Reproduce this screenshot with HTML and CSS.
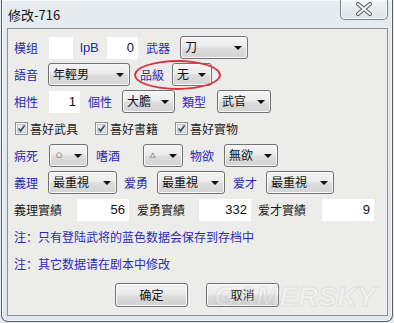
FILE: index.html
```html
<!DOCTYPE html>
<html>
<head>
<meta charset="utf-8">
<link rel="stylesheet" href="styles.css">
</head>
<body>
<div class="window">
  <div class="titlebar">
    <span class="title">修改-716</span>
    <div class="close">
      <svg width="46" height="19" viewBox="0 0 46 19">
        <path d="M17 4 L29 14 M29 4 L17 14" stroke="#5a5f66" stroke-width="4.2" stroke-linecap="round" fill="none"/>
        <path d="M17 4 L29 14 M29 4 L17 14" stroke="#f4f6f8" stroke-width="2" stroke-linecap="round" fill="none"/>
      </svg>
    </div>
  </div>
  <div class="panel">
    <div class="row">
      <span class="lbl blue w28">模组</span>
      <span class="inp w24 m7"></span>
      <span class="lbl blue latin w20 m7">lpB</span>
      <span class="inp w31 m7">0</span>
      <span class="lbl blue w28 m8">武器</span>
      <span class="sel w68 m6">刀</span>
    </div>
    <div class="row">
      <span class="lbl blue w28">語音</span>
      <span class="sel w82 m6">年輕男</span>
      <span class="lbl blue w28 m10">品級</span>
      <span class="sel w40 m4">无</span>
      <span class="mark"></span>
    </div>
    <div class="row">
      <span class="lbl blue w28">相性</span>
      <span class="inp w31 m7">1</span>
      <span class="lbl blue w28 m8">個性</span>
      <span class="sel w53 m6">大膽</span>
      <span class="lbl blue w28 m7">類型</span>
      <span class="sel w54 m7">武官</span>
    </div>
    <div class="row checks">
      <label class="chk"><span class="box"><svg width="13" height="13" viewBox="0 0 13 13"><rect x="0.5" y="0.5" width="12" height="12" fill="#f4f4f4" stroke="#8e8f8f"/><rect x="2.5" y="2.5" width="8" height="8" fill="#e6e8ea" stroke="#c9cbcd"/><path d="M3.5 6.5 L5.6 9 L9.6 3.5" stroke="#3c4a78" stroke-width="1.7" fill="none"/></svg></span>喜好武具</label>
      <label class="chk"><span class="box"><svg width="13" height="13" viewBox="0 0 13 13"><rect x="0.5" y="0.5" width="12" height="12" fill="#f4f4f4" stroke="#8e8f8f"/><rect x="2.5" y="2.5" width="8" height="8" fill="#e6e8ea" stroke="#c9cbcd"/><path d="M3.5 6.5 L5.6 9 L9.6 3.5" stroke="#3c4a78" stroke-width="1.7" fill="none"/></svg></span>喜好書籍</label>
      <label class="chk"><span class="box"><svg width="13" height="13" viewBox="0 0 13 13"><rect x="0.5" y="0.5" width="12" height="12" fill="#f4f4f4" stroke="#8e8f8f"/><rect x="2.5" y="2.5" width="8" height="8" fill="#e6e8ea" stroke="#c9cbcd"/><path d="M3.5 6.5 L5.6 9 L9.6 3.5" stroke="#3c4a78" stroke-width="1.7" fill="none"/></svg></span>喜好實物</label>
    </div>
    <div class="row">
      <span class="lbl blue w28">病死</span>
      <span class="sel w39 m7 sym">○</span>
      <span class="lbl blue w28 m8">嗜酒</span>
      <span class="sel w40 m19 sym">△</span>
      <span class="lbl blue w28 m7">物欲</span>
      <span class="sel w54 m6">無欲</span>
    </div>
    <div class="row">
      <span class="lbl blue w28">義理</span>
      <span class="sel w69 m6">最重視</span>
      <span class="lbl blue w28 m7">爱勇</span>
      <span class="sel w68 m5">最重視</span>
      <span class="lbl blue w28 m8">爱才</span>
      <span class="sel w68 m5">最重視</span>
    </div>
    <div class="row">
      <span class="lbl w48">義理實績</span>
      <span class="inp w52 m15">56</span>
      <span class="lbl w48 m8">爱勇實績</span>
      <span class="inp w52 m14">332</span>
      <span class="lbl w48 m7">爱才實績</span>
      <span class="inp w52 m16">9</span>
    </div>
    <div class="row note">注：只有登陆武将的蓝色数据会保存到存档中</div>
    <div class="row note">注：其它数据请在剧本中修改</div>
    <div class="buttons">
      <span class="btn">确定</span>
      <span class="btn">取消</span>
    </div>
    <span class="watermark">GAMERSKY</span>
  </div>
</div>
</body>
</html>
```

FILE: styles.css
```css
html, body {
  margin: 0;
  padding: 0;
}
body {
  width: 394px;
  height: 323px;
  overflow: hidden;
  background: #e4eaef;
  font-family: "Noto Sans CJK SC", "Noto Sans CJK TC", sans-serif;
  font-size: 12px;
  color: #1a1a1a;
}
.window {
  box-sizing: border-box;
  width: 392px;
  height: 322px;
  margin-left: 1px;
  border: 1px solid #5c5f63;
  border-top: none;
  border-radius: 0 0 7px 7px;
  padding: 0 4px 5px 5px;
  background: linear-gradient(#e6ebef, #dfe5ea);
  box-shadow: inset 0 0 0 1px #f4f7f9;
}
.titlebar {
  height: 28px;
  display: flex;
  justify-content: space-between;
  align-items: flex-start;
}
.title {
  margin-left: 1px;
  margin-top: 6px;
  font-size: 13px;
  line-height: 18px;
  color: #111;
}
.close {
  box-sizing: border-box;
  width: 48px;
  height: 20px;
  border: 1px solid #7d8186;
  border-top: none;
  border-radius: 0 0 5px 5px;
  background: linear-gradient(#f1f4f6, #dde3e8);
  box-shadow: inset 0 0 0 1px #f7f9fa;
}
.close svg {
  display: block;
}
.panel {
  position: relative;
  box-sizing: border-box;
  height: 288px;
  border: 1px solid #8d9094;
  background: #ecedea;
  padding-top: 5px;
  overflow: hidden;
}
.row {
  position: relative;
  height: 27px;
  display: flex;
  align-items: center;
  padding-left: 6px;
}
.lbl {
  flex: none;
  line-height: 16px;
  white-space: nowrap;
}
.blue {
  color: #2727b3;
}
.latin {
  font-family: "Liberation Sans", sans-serif;
  font-size: 13px;
}
.inp {
  flex: none;
  box-sizing: border-box;
  height: 22px;
  background: #ffffff;
  font-family: "Liberation Sans", sans-serif;
  font-size: 13px;
  line-height: 22px;
  text-align: right;
  padding-right: 4px;
  color: #111;
}
.sel {
  flex: none;
  position: relative;
  box-sizing: border-box;
  height: 23px;
  border: 1px solid #707274;
  border-radius: 3px;
  background: linear-gradient(#f5f5f5 0%, #ebebeb 45%, #dcdcdc 55%, #d4d4d4 100%);
  box-shadow: inset 0 0 0 1px #f8f8f8;
  padding-left: 4px;
  line-height: 20px;
  color: #111;
  white-space: nowrap;
}
.sel::after {
  content: "";
  position: absolute;
  right: 5px;
  top: 9px;
  border-left: 4px solid transparent;
  border-right: 4px solid transparent;
  border-top: 4px solid #111;
}
.sym {
  font-family: "DejaVu Sans", sans-serif;
  font-size: 7px;
  font-weight: bold;
  padding-left: 6px;
  line-height: 21px;
  color: #222;
}
.mark {
  position: absolute;
  left: 126px;
  top: -1px;
  width: 87px;
  height: 30px;
  box-sizing: border-box;
  border: 2px solid #d8343c;
  border-radius: 50%;
}
.checks {
  padding-left: 7px;
}
.chk {
  flex: none;
  width: 80px;
  display: flex;
  align-items: center;
  line-height: 16px;
}
.box {
  width: 13px;
  height: 13px;
  margin-right: 2px;
}
.box svg {
  display: block;
}
.note {
  color: #2b2bb6;
  line-height: 16px;
}
.buttons {
  display: flex;
  gap: 18px;
  padding-left: 107px;
  margin-top: 6px;
}
.btn {
  box-sizing: border-box;
  width: 73px;
  height: 24px;
  border: 1px solid #707274;
  border-radius: 3px;
  background: linear-gradient(#f4f4f4 0%, #ebebeb 45%, #dddddd 55%, #d0d0d0 100%);
  box-shadow: inset 0 0 0 1px #fafafa;
  text-align: center;
  line-height: 22px;
  color: #111;
}
.watermark {
  position: absolute;
  left: 206px;
  top: 252px;
  font-family: "Liberation Sans", sans-serif;
  font-weight: bold;
  font-style: italic;
  font-size: 28px;
  line-height: 32px;
  color: rgba(255, 255, 255, 0.22);
  -webkit-text-stroke: 1px rgba(150, 155, 160, 0.2);
  pointer-events: none;
}
.w20 { width: 20px; }
.w24 { width: 24px; }
.w28 { width: 28px; }
.w31 { width: 31px; }
.w39 { width: 39px; }
.w40 { width: 40px; }
.w48 { width: 48px; }
.w52 { width: 52px; }
.w53 { width: 53px; }
.w54 { width: 54px; }
.w68 { width: 68px; }
.w69 { width: 69px; }
.w82 { width: 82px; }
.m4 { margin-left: 4px; }
.m5 { margin-left: 5px; }
.m6 { margin-left: 6px; }
.m7 { margin-left: 7px; }
.m8 { margin-left: 8px; }
.m10 { margin-left: 10px; }
.m14 { margin-left: 14px; }
.m15 { margin-left: 15px; }
.m16 { margin-left: 16px; }
.m19 { margin-left: 19px; }
```
